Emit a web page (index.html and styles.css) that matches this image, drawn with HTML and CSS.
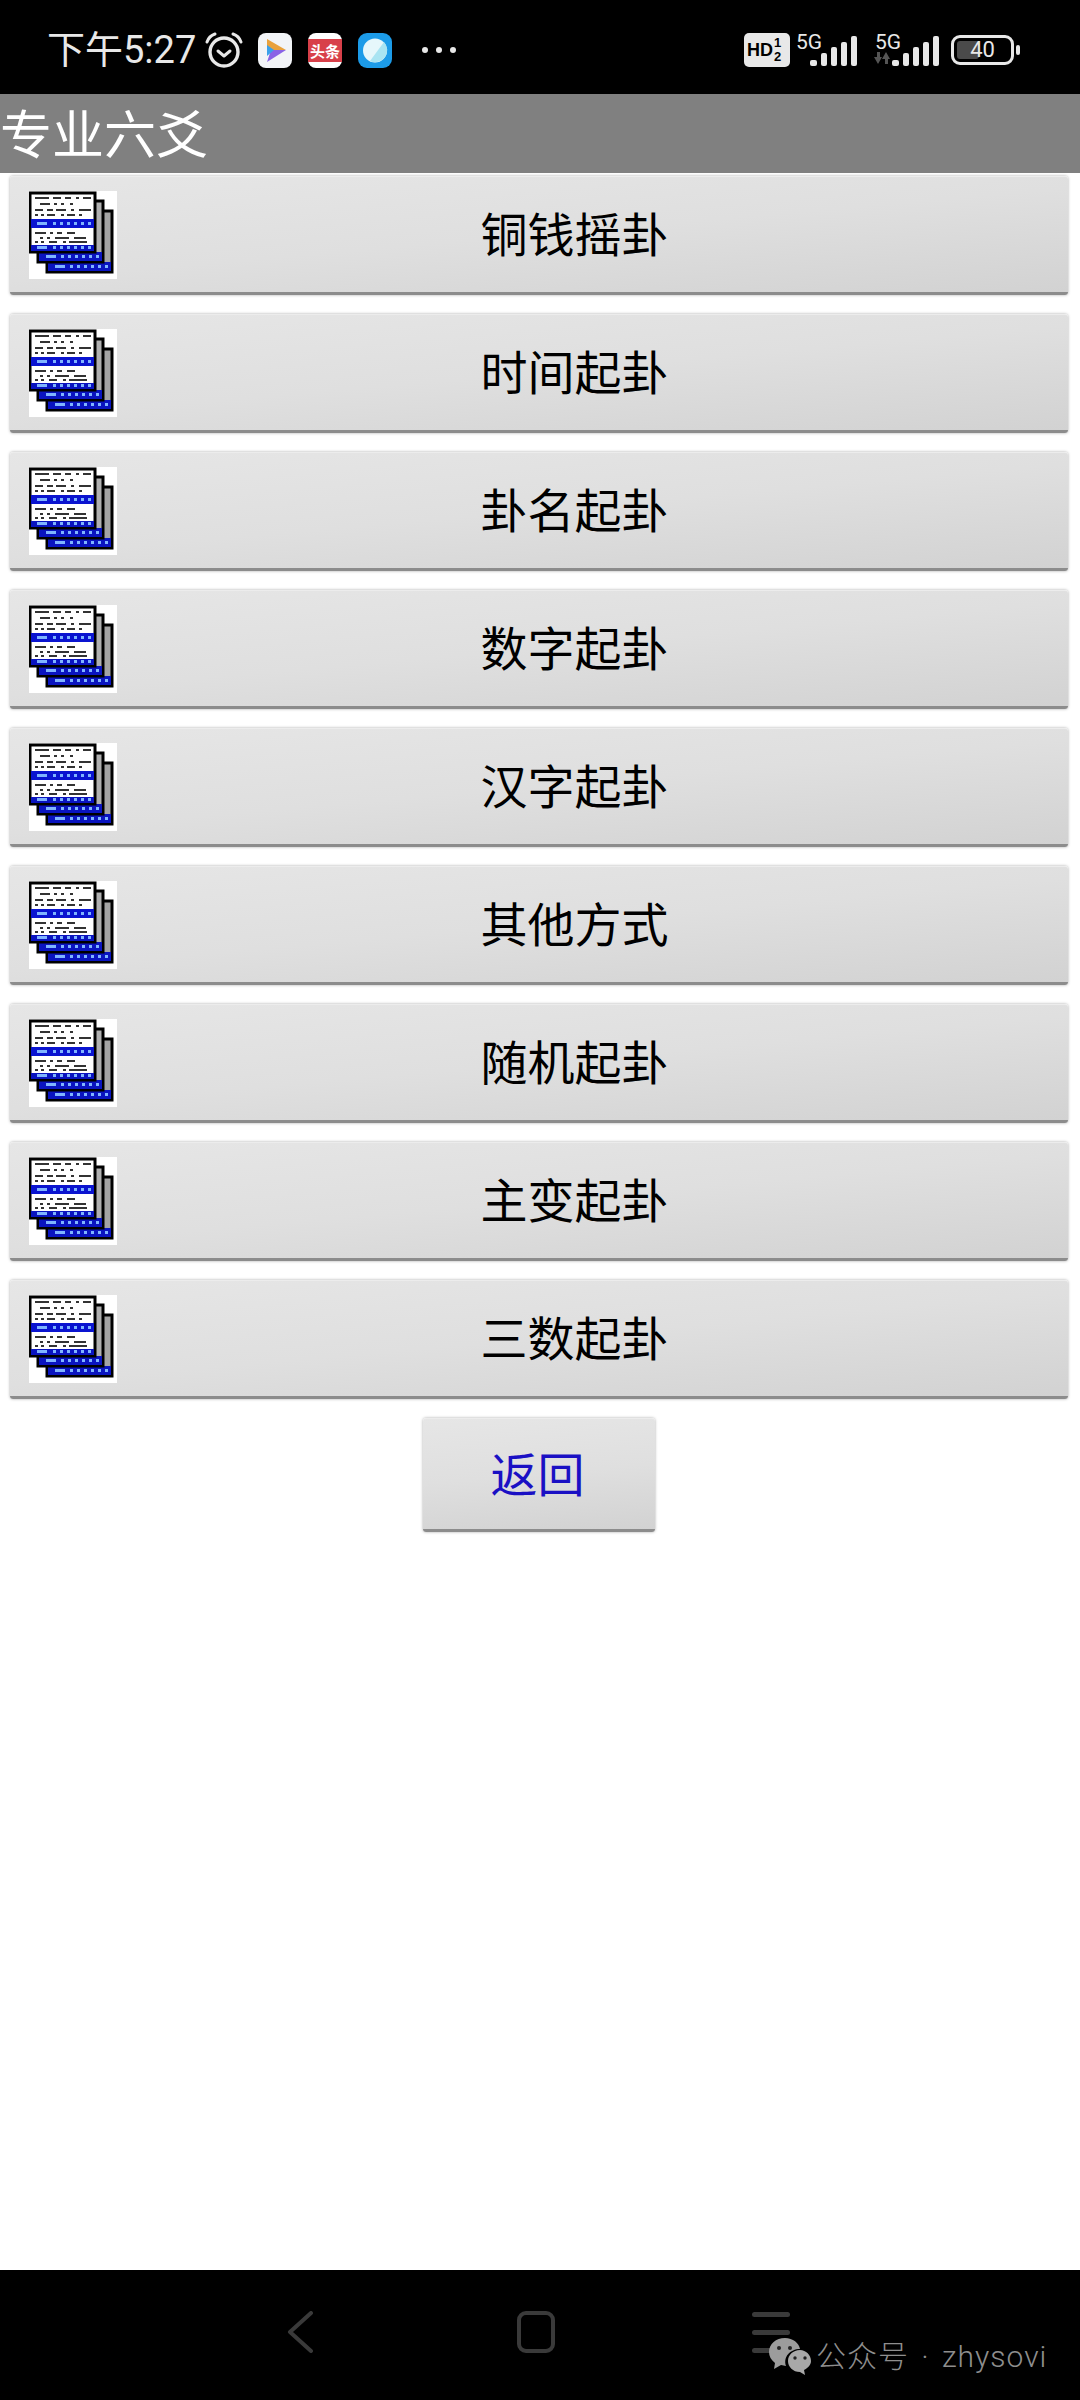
FILE: index.html
```html
<!DOCTYPE html>
<html lang="zh-CN">
<head>
    <meta charset="UTF-8">
    <title>专业六爻</title>
    <link rel="stylesheet" href="styles.css">
</head>
<body>
    <!-- 卦 icon, used by every row -->
    <svg class="defs" width="0" height="0">
        <symbol id="pages" viewBox="0 0 88 88">
            <rect width="88" height="88" fill="#fff"/>
            <rect x="18" y="20" width="65" height="61" fill="#a4a4a4" stroke="#000" stroke-width="3"/>
            <rect x="19" y="71" width="63" height="9" fill="#0a14c0"/>
            <rect x="9" y="10" width="65" height="61" fill="#b0b0b0" stroke="#000" stroke-width="3"/>
            <rect x="10" y="61" width="63" height="9" fill="#0a14c0"/>
            <rect x="1" y="2" width="65" height="59" fill="#fff" stroke="#000" stroke-width="3"/>
            <rect x="2" y="28" width="63" height="9" fill="#0a14d0"/>
            <rect x="2" y="54" width="63" height="6" fill="#0a14c0"/>
            <g fill="#333">
                <rect x="6" y="6" width="14" height="2"/><rect x="24" y="6" width="8" height="2"/><rect x="36" y="6" width="6" height="2"/><rect x="47" y="6" width="3" height="2"/><rect x="54" y="6" width="8" height="2"/>
                <rect x="11" y="12" width="10" height="2"/><rect x="25" y="12" width="3" height="2"/><rect x="32" y="12" width="3" height="2"/><rect x="41" y="12" width="3" height="2"/>
                <rect x="6" y="18" width="8" height="2"/><rect x="18" y="18" width="6" height="2"/><rect x="27" y="18" width="10" height="2"/><rect x="42" y="18" width="3" height="2"/><rect x="50" y="18" width="12" height="2"/>
                <rect x="6" y="23" width="3" height="2"/><rect x="12" y="23" width="3" height="2"/><rect x="18" y="23" width="8" height="2"/><rect x="32" y="23" width="3" height="2"/><rect x="38" y="23" width="8" height="2"/><rect x="50" y="23" width="3" height="2"/>
                <rect x="6" y="41" width="11" height="2"/><rect x="21" y="41" width="3" height="2"/><rect x="28" y="41" width="5" height="2"/><rect x="38" y="41" width="8" height="2"/>
                <rect x="11" y="46" width="3" height="2"/><rect x="18" y="46" width="3" height="2"/><rect x="26" y="46" width="14" height="2"/><rect x="45" y="46" width="12" height="2"/>
                <rect x="6" y="50" width="3" height="2"/><rect x="12" y="50" width="3" height="2"/><rect x="20" y="50" width="8" height="2"/><rect x="34" y="50" width="3" height="2"/><rect x="40" y="50" width="18" height="2"/>
            </g>
            <g fill="#7fb4ff">
                <rect x="8" y="31" width="10" height="3"/><rect x="24" y="31" width="3" height="3"/><rect x="31" y="31" width="3" height="3"/><rect x="38" y="31" width="3" height="3"/><rect x="45" y="31" width="3" height="3"/><rect x="52" y="31" width="3" height="3"/><rect x="59" y="31" width="3" height="3"/>
                <rect x="8" y="55" width="10" height="3"/><rect x="24" y="55" width="3" height="3"/><rect x="31" y="55" width="3" height="3"/><rect x="38" y="55" width="3" height="3"/><rect x="45" y="55" width="3" height="3"/><rect x="52" y="55" width="3" height="3"/><rect x="59" y="55" width="3" height="3"/>
                <rect x="17" y="64" width="10" height="3"/><rect x="32" y="64" width="3" height="3"/><rect x="39" y="64" width="3" height="3"/><rect x="46" y="64" width="3" height="3"/><rect x="53" y="64" width="3" height="3"/><rect x="60" y="64" width="3" height="3"/><rect x="67" y="64" width="3" height="3"/>
                <rect x="26" y="74" width="10" height="3"/><rect x="41" y="74" width="3" height="3"/><rect x="48" y="74" width="3" height="3"/><rect x="55" y="74" width="3" height="3"/><rect x="62" y="74" width="3" height="3"/><rect x="69" y="74" width="3" height="3"/><rect x="76" y="74" width="3" height="3"/>
            </g>
        </symbol>
        <symbol id="bars" viewBox="0 0 48 30">
            <g fill="#e8e8e8">
                <rect x="0" y="24" width="7" height="6" rx="2"/>
                <rect x="11" y="17" width="6" height="13" rx="2"/>
                <rect x="21" y="11" width="6" height="19" rx="2"/>
                <rect x="31" y="6" width="6" height="24" rx="2"/>
                <rect x="41" y="0" width="6" height="30" rx="2"/>
            </g>
        </symbol>
    </svg>

    <header class="status_bar">
        <span class="time">下午5:27</span>
        <svg class="alarm" viewBox="0 0 38 36" width="38" height="36">
            <circle cx="19" cy="20" r="14" fill="none" stroke="#e8e8e8" stroke-width="3.4"/>
            <path d="M13 19l6 5 6-5" fill="none" stroke="#e8e8e8" stroke-width="3" stroke-linecap="round" stroke-linejoin="round"/>
            <path d="M2 10Q4 4 10 2M36 10Q34 4 28 2" fill="none" stroke="#e8e8e8" stroke-width="3" stroke-linecap="round"/>
        </svg>
        <svg class="app_icon" viewBox="0 0 34 35" width="34" height="35">
            <rect width="34" height="35" rx="8" fill="#f2f4f7"/>
            <path d="M9 6L28 17 9 17z" fill="#e9a13c"/>
            <path d="M28 17L9 29 13 17z" fill="#8a63e6"/>
            <path d="M9 12l7 5-7 6z" fill="#3aa0ea"/>
        </svg>
        <span class="toutiao"><span class="toutiao_band">头条</span></span>
        <svg class="app_icon" viewBox="0 0 34 35" width="34" height="35">
            <rect width="34" height="35" rx="9" fill="#1c9be8"/>
            <circle cx="17" cy="17.500" r="12" fill="#e6f7fb"/>
            <path d="M26 9a12 12 0 0 1-14 19z" fill="#a9e4f2"/>
        </svg>
        <span class="dots"><i></i><i></i><i></i></span>

        <span class="status_right">
            <span class="hd">HD<span class="hd_num">1<br>2</span></span>
            <span class="signal">
                <span class="five_g">5G</span>
                <svg class="bars" width="48" height="30"><use href="#bars"/></svg>
            </span>
            <span class="signal signal_two">
                <span class="five_g">5G</span>
                <svg class="arrows" viewBox="0 0 16 12" width="16" height="12">
                    <path d="M0 5h3V0h3v5h2l-4 7zM8 7l4-7 4 7h-2v5h-3V7z" fill="#555"/>
                </svg>
                <svg class="bars" width="48" height="30"><use href="#bars"/></svg>
            </span>
            <span class="battery">
                <span class="battery_body"><span class="battery_fill"></span><span class="battery_num">40</span></span>
                <span class="battery_nub"></span>
            </span>
        </span>
    </header>

    <div class="title_bar">专业六爻</div>

    <main class="menu">
        <button class="btn_row"><svg class="row_icon"><use href="#pages"/></svg><span class="row_txt">铜钱摇卦</span></button>
        <button class="btn_row"><svg class="row_icon"><use href="#pages"/></svg><span class="row_txt">时间起卦</span></button>
        <button class="btn_row"><svg class="row_icon"><use href="#pages"/></svg><span class="row_txt">卦名起卦</span></button>
        <button class="btn_row"><svg class="row_icon"><use href="#pages"/></svg><span class="row_txt">数字起卦</span></button>
        <button class="btn_row"><svg class="row_icon"><use href="#pages"/></svg><span class="row_txt">汉字起卦</span></button>
        <button class="btn_row"><svg class="row_icon"><use href="#pages"/></svg><span class="row_txt">其他方式</span></button>
        <button class="btn_row"><svg class="row_icon"><use href="#pages"/></svg><span class="row_txt">随机起卦</span></button>
        <button class="btn_row"><svg class="row_icon"><use href="#pages"/></svg><span class="row_txt">主变起卦</span></button>
        <button class="btn_row"><svg class="row_icon"><use href="#pages"/></svg><span class="row_txt">三数起卦</span></button>
        <button class="btn_back">返回</button>
    </main>

    <footer class="nav_bar">
        <svg class="nav_back" viewBox="0 0 28 42" width="28" height="42">
            <path d="M25 2L4 21l21 19" fill="none" stroke="#3a3a3a" stroke-width="4" stroke-linecap="round" stroke-linejoin="round"/>
        </svg>
        <span class="nav_home"></span>
        <span class="nav_menu"><i></i><i></i><i></i></span>
        <span class="watermark">
            <svg viewBox="0 0 44 38" width="44" height="38">
                <path d="M17 0C8 0 1 6 1 14c0 4 2 8 6 11l-1 6 7-4c2 0 3 1 5 1-3-9 4-17 14-17C31 5 25 0 17 0z" fill="#9c9c9c"/>
                <path d="M32 12c-7 0-12 5-12 11s5 11 12 11l5 3-1-5c4-2 7-5 7-9 0-6-5-11-11-11z" fill="#a8a8a8"/>
                <circle cx="11" cy="10" r="2" fill="#222"/><circle cx="22" cy="10" r="2" fill="#222"/>
                <circle cx="27" cy="20" r="1.700" fill="#222"/><circle cx="37" cy="20" r="1.700" fill="#222"/>
            </svg>
            <span class="watermark_txt">公众号 · zhysovi</span>
        </span>
    </footer>
</body>
</html>
```

FILE: styles.css
```css
*{
    margin:0;
    padding:0;
    box-sizing: border-box;
}
html, body{
    width: 1080px;
    height: 2400px;
    overflow: hidden;
}
body{
    display: flex;
    flex-direction: column;
    background-color: #fff;
    font-family: "Noto Sans CJK SC", "Roboto", sans-serif;
}
.defs{
    position: absolute;
}

/* status bar */
.status_bar{
    height: 94px;
    flex: none;
    display: flex;
    align-items: center;
    padding: 6px 60px 0 47px;
    background-color: #000;
    color: #e8e8e8;
}
.time{
    font-size: 38px;
    line-height: 44px;
    width: 158px;
    font-family: "Roboto", "Noto Sans CJK SC", sans-serif;
    white-space: nowrap;
}
.alarm{
    flex: none;
    margin-right: 15px;
}
.app_icon{
    flex: none;
    margin-right: 16px;
}
.toutiao{
    width: 34px;
    height: 35px;
    margin-right: 16px;
    flex: none;
    display: flex;
    align-items: center;
    border-radius: 8px;
    background-color: #fff;
}
.toutiao_band{
    width: 100%;
    height: 23px;
    background-color: #d8404a;
    color: #fff;
    font-size: 15px;
    line-height: 23px;
    font-weight: bold;
    text-align: center;
    white-space: nowrap;
}
.dots{
    display: flex;
    gap: 8px;
    margin-left: 14px;
}
.dots i{
    width: 6px;
    height: 6px;
    border-radius: 50%;
    background-color: #e8e8e8;
}
.status_right{
    margin-left: auto;
    display: flex;
    align-items: center;
}
.hd{
    width: 46px;
    height: 34px;
    display: flex;
    align-items: center;
    padding-left: 3px;
    background-color: #e8e8e8;
    border-radius: 5px;
    color: #000;
    font-family: "Liberation Sans", sans-serif;
    font-size: 18px;
    font-weight: bold;
}
.hd_num{
    font-size: 13px;
    line-height: 14px;
    margin-left: 1px;
    text-align: center;
}
.signal{
    position: relative;
    width: 63px;
    height: 34px;
    margin-left: 5px;
}
.signal_two{
    margin-left: 16px;
    width: 66px;
}
.five_g{
    position: absolute;
    left: 1px;
    top: -3px;
    font-family: "Roboto", sans-serif;
    font-size: 21px;
    line-height: 24px;
}
.bars{
    position: absolute;
    right: 0;
    bottom: 1px;
}
.arrows{
    position: absolute;
    left: 0;
    bottom: 3px;
}
.battery{
    display: flex;
    align-items: center;
    margin-left: 11px;
}
.battery_body{
    position: relative;
    width: 63px;
    height: 30px;
    border: 3px solid #e8e8e8;
    border-radius: 9px;
    display: flex;
    align-items: center;
    justify-content: center;
}
.battery_fill{
    position: absolute;
    left: 3px;
    top: 3px;
    bottom: 3px;
    width: 22px;
    background-color: #4a4a4a;
    border-radius: 3px;
}
.battery_num{
    position: relative;
    font-family: "Roboto", sans-serif;
    font-size: 22px;
    line-height: 24px;
}
.battery_nub{
    width: 4px;
    height: 10px;
    margin-left: 2px;
    background-color: #e8e8e8;
    border-radius: 2px;
}

.title_bar{
    height: 79px;
    flex: none;
    background-color: #808080;
    color: #fff;
    font-size: 52px;
    line-height: 76px;
    white-space: nowrap;
}

/* rows */
.menu{
    flex: 1;
    display: flex;
    flex-direction: column;
    align-items: flex-start;
    gap: 19px;
    padding: 3px 12px 0 10px;
}
.btn_row, .btn_back{
    border: none;
    border-top: 1px solid #ececec;
    border-bottom: 3px solid #8c8c8c;
    border-radius: 3px;
    background: linear-gradient(175deg, #e6e6e6 0%, #dfdfdf 50%, #d2d2d2 100%);
    box-shadow: 0 0 3px rgba(0,0,0,0.35);
    font-family: inherit;
}
.btn_row{
    width: 100%;
    height: 119px;
    flex: none;
    display: flex;
    align-items: center;
    padding: 0 36px 0 19px;
}
.row_icon{
    width: 88px;
    height: 88px;
    flex: none;
    filter: blur(0.6px);
}
.row_txt{
    flex: 1;
    text-align: center;
    font-size: 47px;
    line-height: 60px;
    margin-top: -5px;
    color: #000;
}
.btn_back{
    width: 232px;
    height: 114px;
    margin-left: 413px;
    padding: 0 3px 5px 0;
    font-size: 47px;
    color: #1a10c4;
}

/* navigation bar */
.nav_bar{
    position: relative;
    height: 130px;
    flex: none;
    display: flex;
    align-items: center;
    padding: 0 0 6px 286px;
    background-color: #000;
}
.nav_back{
    flex: none;
}
.nav_home{
    width: 38px;
    height: 42px;
    margin-left: 203px;
    border: 4px solid #3a3a3a;
    border-radius: 9px;
}
.nav_menu{
    width: 38px;
    margin-left: 197px;
    display: flex;
    flex-direction: column;
    gap: 13px;
}
.nav_menu i{
    height: 5px;
    border-radius: 3px;
    background-color: #3a3a3a;
}
.watermark{
    position: absolute;
    left: 768px;
    top: 68px;
    display: flex;
    align-items: center;
    gap: 4px;
    color: #8e8e8e;
    font-size: 30px;
    line-height: 38px;
    white-space: nowrap;
}
.watermark_txt{
    font-family: "Roboto", "Noto Sans CJK SC", sans-serif;
    font-weight: 300;
    letter-spacing: 1px;
    word-spacing: 4px;
}
```
